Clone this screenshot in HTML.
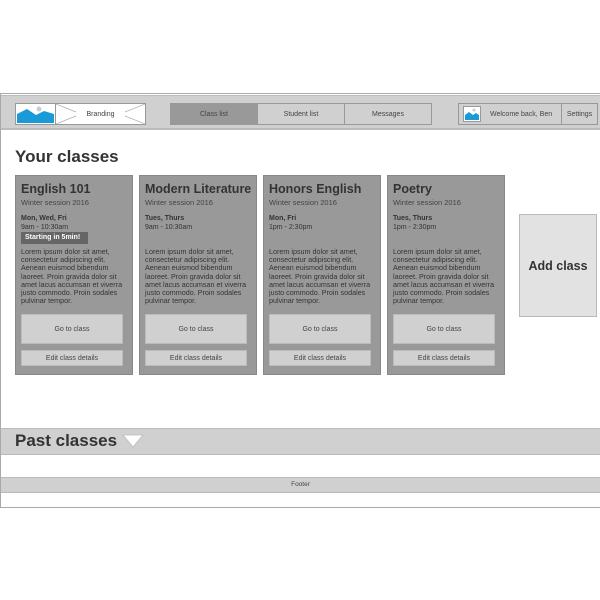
<!DOCTYPE html>
<html><head><style>
*{box-sizing:border-box;margin:0;padding:0}
body{width:600px;height:600px;background:#fff;position:relative;overflow:hidden;font-family:"Liberation Sans",sans-serif;color:#333}
.a{position:absolute}
.frame{left:0;top:93px;width:600px;height:415px;border:1px solid #aaa;border-right:none}
.hdr{left:1px;top:95px;width:599px;height:35px;background:#d0d0d0;border-top:1px solid #bbb;border-bottom:2px solid #bbb}
.box{position:absolute;border:1px solid #999;background:#d0d0d0;font-size:7px;display:flex;align-items:center;justify-content:center;color:#444}
.card{position:absolute;top:175px;width:118px;height:200px;background:#999;border:1px solid #888}
.card h2{position:absolute;left:5px;top:6px;font-size:12.5px;font-weight:bold;color:#333;white-space:nowrap}
.card .s{position:absolute;left:5px;top:22px;font-size:7.5px;color:#444}
.card .d{position:absolute;left:5px;top:38px;font-size:7px;color:#333;line-height:9px}
.card .l{position:absolute;left:5px;top:72px;font-size:7.2px;line-height:8.2px;color:#333;white-space:nowrap}
.card .g{position:absolute;left:5px;top:138px;width:102px;height:30px;background:#d0d0d0;border:1px solid #bbb;font-size:7px;display:flex;align-items:center;justify-content:center;color:#444}
.card .e{position:absolute;left:5px;top:174px;width:102px;height:16px;background:#d0d0d0;border:1px solid #bbb;font-size:7px;display:flex;align-items:center;justify-content:center;color:#444}
</style></head><body>
<div class="a frame"></div>
<div class="a hdr"></div>
<div class="box" style="left:15px;top:103px;width:41px;height:22px;background:#fff">
<svg width="37" height="18" viewBox="0 0 37 18"><path d="M0 18V9L10 4 19 10 27 6 37 9V18Z" fill="#1a9ad6"/><circle cx="22" cy="4" r="2.5" fill="#ccc"/></svg></div>
<div class="box" style="left:55px;top:103px;width:91px;height:22px;background:#fff">
<svg class="a" style="left:0;top:0" width="89" height="20"><path d="M0 0L20 8M0 20L20 12M89 0L69 8M89 20L69 12" stroke="#aaa" stroke-width=".7"/></svg><span style="position:relative">Branding</span></div>
<div class="box" style="left:170px;top:103px;width:88px;height:22px;background:#999">Class list</div>
<div class="box" style="left:257px;top:103px;width:88px;height:22px">Student list</div>
<div class="box" style="left:344px;top:103px;width:88px;height:22px">Messages</div>
<div class="box" style="left:458px;top:103px;width:104px;height:22px;justify-content:flex-start">
<svg style="margin-left:4px" width="18" height="16" viewBox="0 0 18 16"><rect x=".5" y=".5" width="17" height="15" fill="#fff" stroke="#999"/><path d="M2 14V9L6 6 10 9 13 7 16 9V14Z" fill="#1a9ad6"/><circle cx="11" cy="4" r="1.5" fill="#ccc"/></svg>
<span style="margin-left:9px">Welcome back, Ben</span></div>
<div class="box" style="left:561px;top:103px;width:37px;height:22px">Settings</div>
<div class="a" style="left:15px;top:147px;font-size:17px;font-weight:bold;color:#333">Your classes</div>

<div class="card" style="left:15px"><h2>English 101</h2><div class="s">Winter session 2016</div><div class="d"><b>Mon, Wed, Fri</b><br>9am - 10:30am</div>
<div class="a" style="left:5px;top:56px;width:67px;height:12px;background:#666;color:#fff;font-size:7px;font-weight:bold;padding-left:4px;line-height:12px">Starting in 5min!</div>
<div class="l">Lorem ipsum dolor sit amet,<br>consectetur adipiscing elit.<br>Aenean euismod bibendum<br>laoreet. Proin gravida dolor sit<br>amet lacus accumsan et viverra<br>justo commodo. Proin sodales<br>pulvinar tempor.</div><div class="g">Go to class</div><div class="e">Edit class details</div></div>
<div class="card" style="left:139px"><h2>Modern Literature</h2><div class="s">Winter session 2016</div><div class="d"><b>Tues, Thurs</b><br>9am - 10:30am</div>
<div class="l">Lorem ipsum dolor sit amet,<br>consectetur adipiscing elit.<br>Aenean euismod bibendum<br>laoreet. Proin gravida dolor sit<br>amet lacus accumsan et viverra<br>justo commodo. Proin sodales<br>pulvinar tempor.</div><div class="g">Go to class</div><div class="e">Edit class details</div></div>
<div class="card" style="left:263px"><h2>Honors English</h2><div class="s">Winter session 2016</div><div class="d"><b>Mon, Fri</b><br>1pm - 2:30pm</div>
<div class="l">Lorem ipsum dolor sit amet,<br>consectetur adipiscing elit.<br>Aenean euismod bibendum<br>laoreet. Proin gravida dolor sit<br>amet lacus accumsan et viverra<br>justo commodo. Proin sodales<br>pulvinar tempor.</div><div class="g">Go to class</div><div class="e">Edit class details</div></div>
<div class="card" style="left:387px"><h2>Poetry</h2><div class="s">Winter session 2016</div><div class="d"><b>Tues, Thurs</b><br>1pm - 2:30pm</div>
<div class="l">Lorem ipsum dolor sit amet,<br>consectetur adipiscing elit.<br>Aenean euismod bibendum<br>laoreet. Proin gravida dolor sit<br>amet lacus accumsan et viverra<br>justo commodo. Proin sodales<br>pulvinar tempor.</div><div class="g">Go to class</div><div class="e">Edit class details</div></div>

<div class="a" style="left:519px;top:214px;width:78px;height:103px;background:#e2e2e2;border:1px solid #bbb;display:flex;align-items:center;justify-content:center;font-size:12.5px;font-weight:bold;color:#333">Add class</div>

<div class="a" style="left:1px;top:428px;width:599px;height:27px;background:#d0d0d0;border-top:1px solid #bbb;border-bottom:1px solid #bbb"></div>
<div class="a" style="left:15px;top:431px;font-size:17px;font-weight:bold;color:#333">Past classes</div>
<svg class="a" style="left:122px;top:434px" width="22" height="14"><path d="M1 1H21L11 13Z" fill="#fff" stroke="#bbb" stroke-width=".8"/></svg>
<div class="a" style="left:1px;top:477px;width:599px;height:16px;background:#d0d0d0;border-top:1px solid #bbb;border-bottom:1px solid #bbb;font-size:6.5px;color:#444;text-align:center;line-height:14px">Footer</div>
</body></html>
